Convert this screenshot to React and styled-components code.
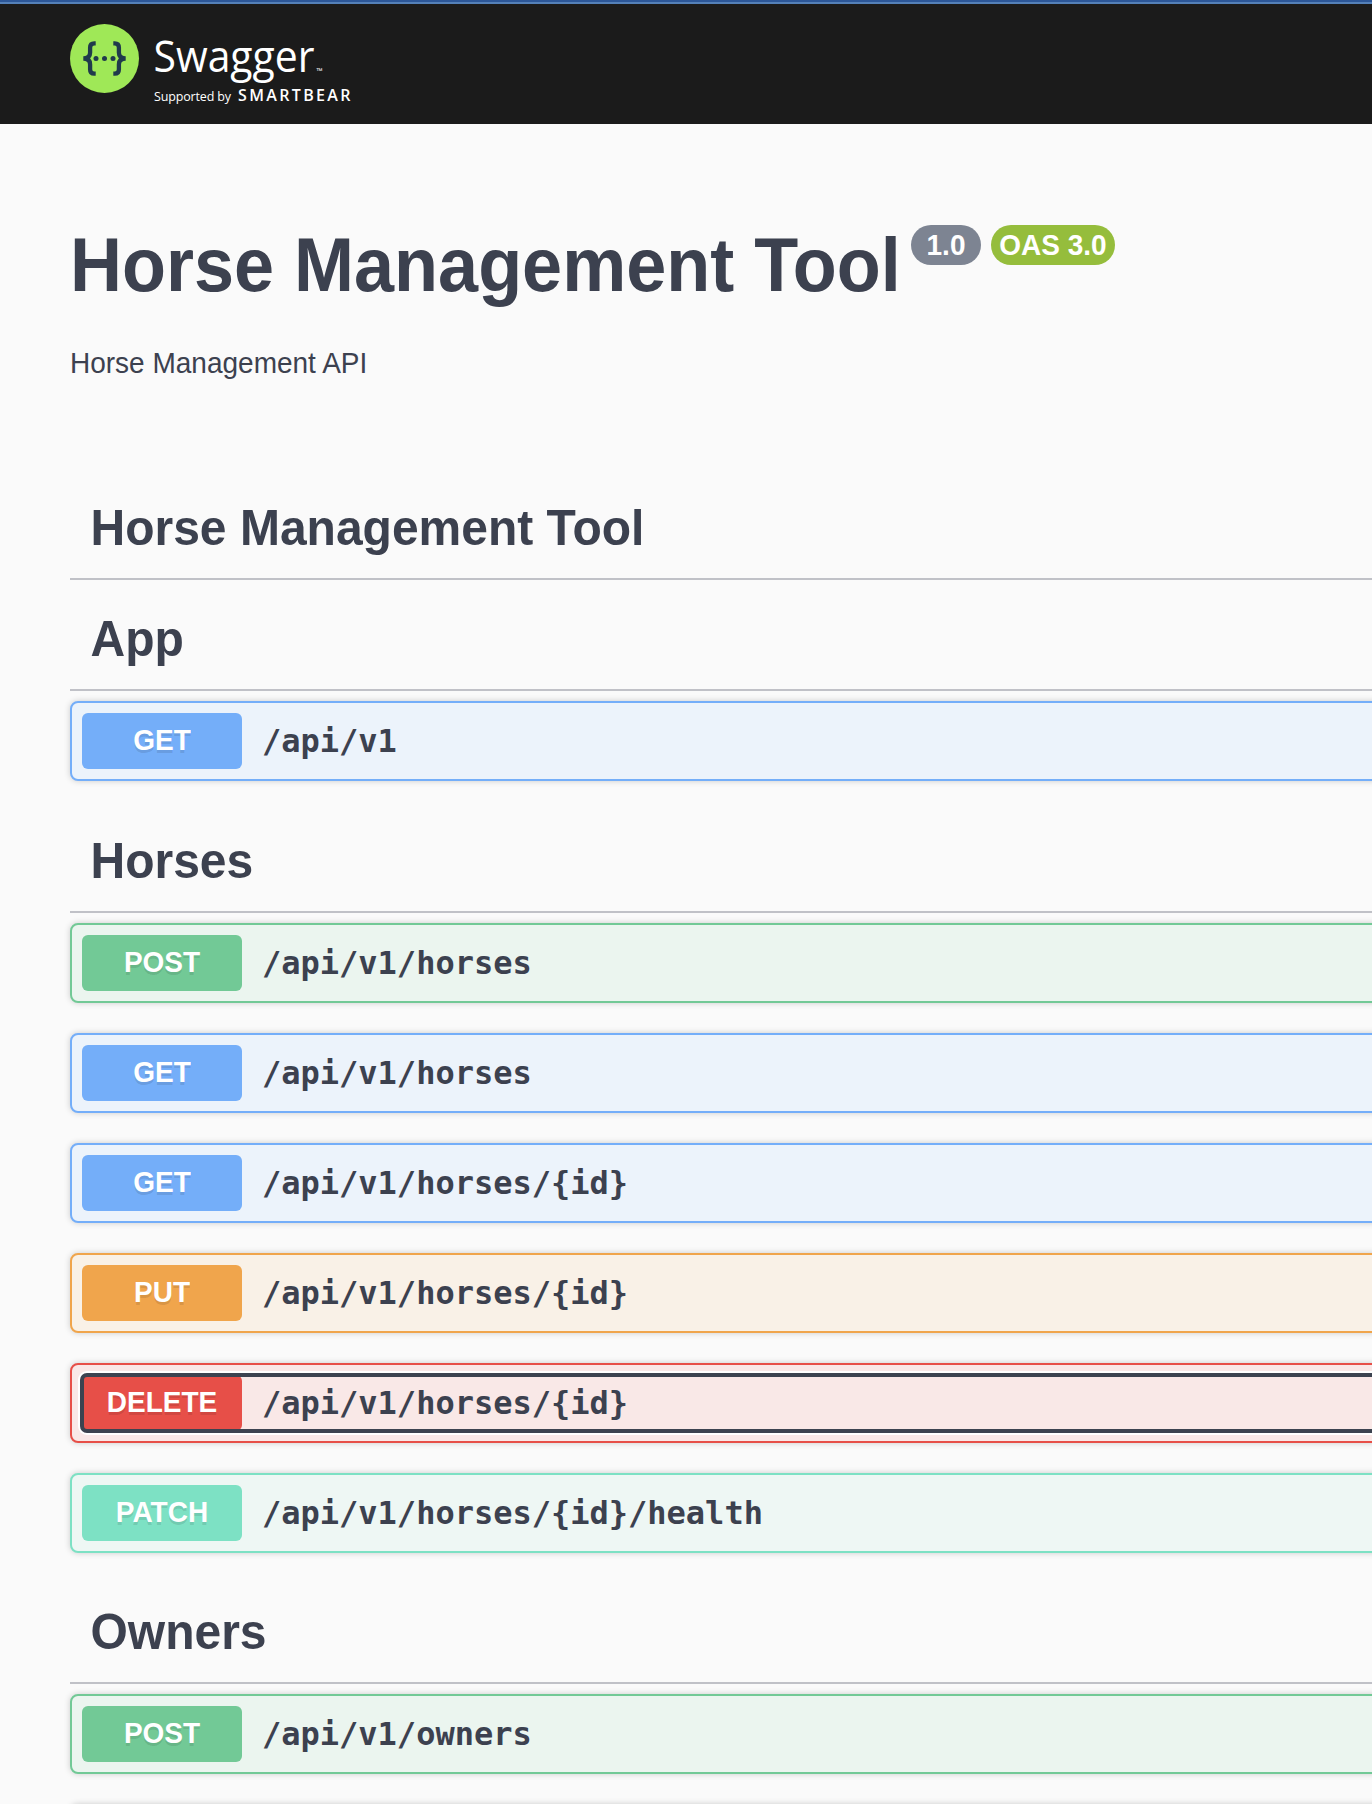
import React from "react";
import styled, { createGlobalStyle } from "styled-components";

const sans = `"Liberation Sans", Arial, sans-serif`;
const mono = `"DejaVu Sans Mono", Menlo, monospace`;

const methods = {
  get: { main: "#74aef9", tint: "#ecf3fb" },
  post: { main: "#72c996", tint: "#ebf5ef" },
  put: { main: "#f0a54c", tint: "#f9f1e7" },
  delete: { main: "#e74f48", tint: "#f9e8e7" },
  patch: { main: "#7de1c4", tint: "#eef7f4" },
};

const GlobalStyle = createGlobalStyle`
  html, body { margin: 0; background: #fafafa; }
  body { height: 1804px; overflow: hidden; font-family: ${sans}; color: #3c414f; }
  * { box-sizing: border-box; }
`;

const Page = styled.div`
  height: 1804px;
  overflow: hidden;
`;

const TopBar = styled.header`
  height: 124px;
  padding: 20px 0 0 70px;
  display: flex;
  background: #1b1b1b;
  border-top: 2px solid #2c5697;
  box-shadow: inset 0 2px 0 #5480b8;
`;

const Logo = styled.svg`
  display: block;
  flex: none;
`;

const Info = styled.section`
  height: 366px;
  padding: 93px 0 0 70px;
`;

const TitleRow = styled.div`
  display: flex;
  align-items: flex-start;
  white-space: nowrap;
`;

const Title = styled.h1`
  margin: -2px 0 0;
  width: 829px;
  font-size: 72px;
  line-height: 100px;
  transform: scaleY(1.05);
`;

const Badges = styled.div`
  display: flex;
  gap: 10px;
  margin: 8px 0 0 12px;
`;

const Badge = styled.span`
  height: 40px;
  width: ${(p) => p.$width}px;
  border-radius: 20px;
  background: ${(p) => p.$color};
  color: #fff;
  font-size: 28px;
  font-weight: 700;
  line-height: 42px;
  text-align: center;
`;

const Description = styled.p`
  margin: 29px 0 0;
  font-size: 28px;
  line-height: 40px;
  transform: scaleY(1.05);
`;

const Operations = styled.main`
  width: 1440px;
  margin-left: 70px;
`;

const TagHeading = styled.h2`
  margin: 0 0 10px;
  height: ${(p) => p.$height || 101.4}px;
  padding: 0 0 22px 20.5px;
  display: flex;
  align-items: flex-end;
  border-bottom: 2px solid #c0c1c7;
  font-size: 48px;
  line-height: 56px;
`;

const TallText = styled.span`
  display: block;
  transform: scaleY(1.05);
`;

const Operation = styled.div`
  height: 80px;
  margin-bottom: 30px;
  padding: 10px;
  border: 2px solid ${(p) => methods[p.$method].main};
  border-radius: 8px;
  background: ${(p) => methods[p.$method].tint};
  box-shadow: 0 0 6px rgba(0, 0, 0, 0.19);
`;

const Summary = styled.div`
  height: 56px;
  display: flex;
  align-items: center;
  border-radius: 4px;
  ${(p) =>
    p.$focused &&
    `
    position: relative;
    &::after {
      content: "";
      position: absolute;
      inset: -2px;
      border: 4px solid #3c4350;
      border-radius: 7px;
      box-shadow: 0 0 0 2px #fff;
    }
  `}
`;

const Method = styled.span`
  width: 160px;
  height: 56px;
  flex: none;
  border-radius: 6px;
  background: ${(p) => methods[p.$method].main};
  color: #fff;
  font-size: 28px;
  font-weight: 700;
  line-height: 56px;
  text-align: center;
  text-transform: uppercase;
  text-shadow: 0 2px 0 rgba(0, 0, 0, 0.1);
`;

const Path = styled.span`
  padding: 0 20px;
  font-family: ${mono};
  font-size: 32px;
  font-weight: 700;
  line-height: 40px;
  white-space: nowrap;
`;

const groups = [
  { tag: "App", operations: [["get", "/api/v1"]] },
  {
    tag: "Horses",
    operations: [
      ["post", "/api/v1/horses"],
      ["get", "/api/v1/horses"],
      ["get", "/api/v1/horses/{id}"],
      ["put", "/api/v1/horses/{id}"],
      ["delete", "/api/v1/horses/{id}", true],
      ["patch", "/api/v1/horses/{id}/health"],
    ],
  },
  {
    tag: "Owners",
    operations: [["post", "/api/v1/owners"], ["get"]],
  },
];

function SwaggerLogo() {
  return (
    <Logo width="290" height="90" viewBox="0 0 290 90">
      <circle cx="34.5" cy="36.5" r="34.5" fill="#9fe857" />
      <g fill="none" stroke="#203a4c" strokeWidth="4.3">
        <path d="M25.7 21.3h-1.4c-3 0-4.2 1.4-4.2 4.3v5c0 3.5-1.800 5.900-6.800 5.900 5 0 6.800 2.400 6.800 5.900v5c0 2.900 1.200 4.300 4.200 4.300h1.400" />
        <path d="M43.3 21.3h1.4c3 0 4.2 1.4 4.2 4.3v5c0 3.5 1.800 5.900 6.800 5.900-5 0-6.800 2.400-6.800 5.900v5c0 2.900-1.200 4.300-4.200 4.300h-1.400" />
      </g>
      <g fill="#203a4c">
        <circle cx="26" cy="36.5" r="2.5" />
        <circle cx="34.5" cy="36.5" r="2.5" />
        <circle cx="43" cy="36.5" r="2.5" />
      </g>
      <g fill="#fff" fontFamily="'Open Sans', 'Noto Sans', sans-serif">
        <text x="83.5" y="50" fontSize="43.5" textLength="161" lengthAdjust="spacingAndGlyphs">Swagger</text>
        <text x="246.5" y="52" fontSize="8">™</text>
        <text x="84" y="79" fontSize="12.5" textLength="77">Supported by</text>
        <text x="168" y="78.5" fontSize="16" fontWeight="600" textLength="112.5">SMARTBEAR</text>
      </g>
    </Logo>
  );
}

export default function App() {
  return (
    <>
      <GlobalStyle />
      <Page>
        <TopBar>
          <SwaggerLogo />
        </TopBar>
        <Info>
          <TitleRow>
            <Title>Horse Management Tool</Title>
            <Badges>
              <Badge $width={70} $color="#7d8492">
                <TallText>1.0</TallText>
              </Badge>
              <Badge $width={124} $color="#95bd3c">
                <TallText>OAS 3.0</TallText>
              </Badge>
            </Badges>
          </TitleRow>
          <Description>Horse Management API</Description>
        </Info>
        <Operations>
          <TagHeading $height={90}>
            <TallText>Horse Management Tool</TallText>
          </TagHeading>
          {groups.map(({ tag, operations }) => (
            <React.Fragment key={tag}>
              <TagHeading>
                <TallText>{tag}</TallText>
              </TagHeading>
              {operations.map(([method, path, focused]) => (
                <Operation key={method + path} $method={method}>
                  {path && (
                    <Summary $focused={focused}>
                      <Method $method={method}>
                        <TallText>{method}</TallText>
                      </Method>
                      <Path>{path}</Path>
                    </Summary>
                  )}
                </Operation>
              ))}
            </React.Fragment>
          ))}
        </Operations>
      </Page>
    </>
  );
}
